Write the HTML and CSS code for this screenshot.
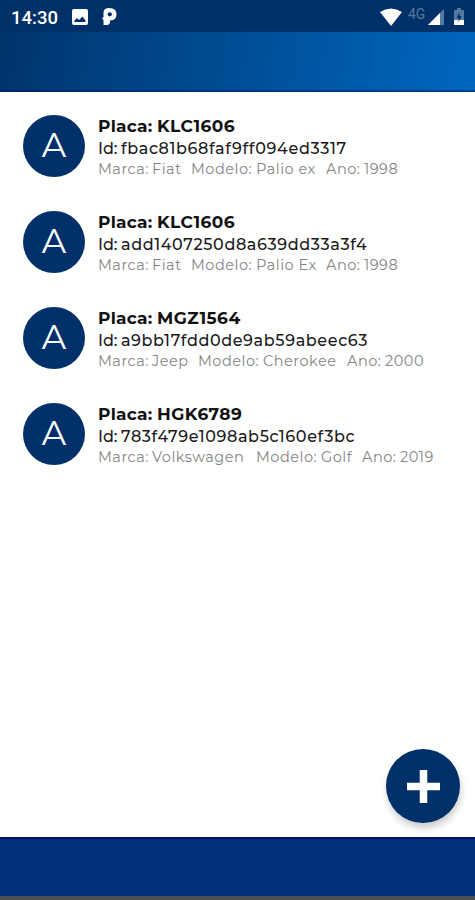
FILE: index.html
```html
<!DOCTYPE html>
<html lang="pt-BR">
<head>
  <meta charset="UTF-8" />
  <meta name="viewport" content="width=device-width, initial-scale=1.0"/>
  <title>Placas</title>
  <link rel="stylesheet" href="styles.css">
</head>
<body>
  <div class="status-bar">
    <span class="time">14:30</span>
    <svg class="icon-picture" width="16" height="16" viewBox="0 0 16 16">
      <rect width="16" height="16" rx="2" fill="#fff"/>
      <path d="M2.500 13v-1.500l2.500-2.500 2 2L10.500 7.500l3 4V13z" fill="#003068"/>
    </svg>
    <svg class="icon-p" width="15" height="17" viewBox="0 0 15 17">
      <path d="M1.500 17V12L0 10.500 1.500 9V4Q2 0 7 0q7.500 0 7.500 6.300Q14.500 12.500 8 12.500V15l-2 2z" fill="#fff"/>
      <circle cx="7.800" cy="6.300" r="2.100" fill="#003068"/>
    </svg>
    <div class="status-right">
      <svg class="icon-wifi" width="22" height="18" viewBox="0 0 22 18">
        <path d="M0 4Q11-3 22 4L11 18z" fill="#fff"/>
      </svg>
      <span class="network">4G</span>
      <svg class="icon-signal" width="16" height="16" viewBox="0 0 16 16">
        <path d="M0 16L16 0v16z" fill="#56799f"/>
        <path d="M0 16L12 4v12z" fill="#fff"/>
      </svg>
      <svg class="icon-battery" width="10" height="17" viewBox="0 0 10 17">
        <path d="M0 2h3V0h4v2h3v10H0z" fill="#56799f"/>
        <path d="M0 12h10v5H0z" fill="#fff"/>
        <path d="M5.500 4L2.500 10h2v4l3-6h-2z" fill="#003068"/>
      </svg>
    </div>
  </div>

  <header class="header"></header>

  <main class="list">
    <div class="item">
      <div class="avatar">A</div>
      <div class="info">
        <div class="placa"><span class="label">Placa:</span><span>KLC1606</span></div>
        <div class="codigo"><span class="label">Id:</span><span>fbac81b68faf9ff094ed3317</span></div>
        <div class="detalhes"><span class="marca">Marca:</span><span class="fiat">Fiat</span><span class="modelo">Modelo:</span><span class="palio">Palio ex</span><span class="ano">Ano:</span><span>1998</span></div>
      </div>
    </div>
    <div class="item">
      <div class="avatar">A</div>
      <div class="info">
        <div class="placa"><span class="label">Placa:</span><span>KLC1606</span></div>
        <div class="codigo"><span class="label">Id:</span><span>add1407250d8a639dd33a3f4</span></div>
        <div class="detalhes"><span class="marca">Marca:</span><span class="fiat">Fiat</span><span class="modelo">Modelo:</span><span class="palio">Palio Ex</span><span class="ano">Ano:</span><span>1998</span></div>
      </div>
    </div>
    <div class="item">
      <div class="avatar">A</div>
      <div class="info">
        <div class="placa"><span class="label">Placa:</span><span>MGZ1564</span></div>
        <div class="codigo"><span class="label">Id:</span><span>a9bb17fdd0de9ab59abeec63</span></div>
        <div class="detalhes"><span class="marca">Marca:</span><span class="jeep">Jeep</span><span class="modelo">Modelo:</span><span class="cherokee">Cherokee</span><span class="ano">Ano:</span><span>2000</span></div>
      </div>
    </div>
    <div class="item">
      <div class="avatar">A</div>
      <div class="info">
        <div class="placa"><span class="label">Placa:</span><span>HGK6789</span></div>
        <div class="codigo"><span class="label">Id:</span><span>783f479e1098ab5c160ef3bc</span></div>
        <div class="detalhes"><span class="marca">Marca:</span><span class="volks">Volkswagen</span><span class="modelo">Modelo:</span><span class="golf">Golf</span><span class="ano">Ano:</span><span>2019</span></div>
      </div>
    </div>
  </main>

  <button class="add-button" aria-label="Adicionar">
    <svg width="33" height="33" viewBox="0 0 33 33">
      <path d="M16.500 0v33M0 16.500h33" stroke="#fff" stroke-width="7.500"/>
    </svg>
  </button>

  <footer class="footer"></footer>
</body>
</html>
```

FILE: styles.css
```css
body {
  margin: 0;
  height: 900px;
  display: flex;
  flex-direction: column;
  overflow: hidden;
  background-color: #fff;
  font-family: Montserrat, Inter, sans-serif;
}

.status-bar {
  display: flex;
  align-items: center;
  height: 32px;
  padding: 1px 11px 0 11px;
  box-sizing: border-box;
  background-color: #003068;
  color: #fff;
  font-family: Roboto, sans-serif;
}

.time {
  width: 61px;
  font-size: 18.5px;
  font-weight: 500;
  line-height: 32px;
  margin-top: 2px;
}

.icon-p {
  margin-left: 14px;
}

.status-right {
  display: flex;
  align-items: center;
  margin-left: auto;
}

.network {
  width: 20px;
  margin: -6px 0 0 6px;
  color: #56799f;
  font-size: 14px;
  font-weight: 400;
}

.icon-battery {
  margin-left: 10px;
}

.header {
  height: 60px;
  box-sizing: border-box;
  border-bottom: 2px solid rgba(0, 20, 110, 0.5);
  background: linear-gradient(100deg, #00346c, #0067bf);
}

.list {
  flex: 1;
  padding-top: 7px;
}

.item {
  display: flex;
  align-items: center;
  height: 96px;
  padding-left: 23px;
}

.avatar {
  width: 62px;
  height: 62px;
  margin-right: 13px;
  border-radius: 50%;
  background-color: #00306a;
  color: #fff;
  font-size: 34px;
  font-weight: 400;
  line-height: 60px;
  text-align: center;
  margin-top: -2px;
}

.info {
  white-space: nowrap;
  margin-top: -1px;
}

.placa,
.codigo,
.detalhes {
  display: flex;
}

.placa {
  color: #111;
  font-size: 17px;
  font-weight: 700;
  line-height: 23px;
  letter-spacing: 0.45px;
}

.placa .label {
  width: 59px;
  letter-spacing: 0.2px;
}

.codigo {
  color: #1a1a1a;
  font-size: 16px;
  font-weight: 500;
  line-height: 21px;
  letter-spacing: 0.62px;
}

.codigo .label {
  width: 23px;
  letter-spacing: 0;
}

.detalhes {
  color: #858585;
  font-size: 14.5px;
  line-height: 20px;
  letter-spacing: 0.5px;
}

.marca {
  width: 54px;
}

.modelo {
  width: 65px;
}

.ano {
  width: 38px;
}

.fiat {
  width: 39px;
}

.palio {
  width: 70px;
}

.jeep {
  width: 46px;
}

.cherokee {
  width: 84px;
}

.volks {
  width: 104px;
}

.golf {
  width: 41px;
}

.add-button {
  position: absolute;
  left: 386px;
  top: 749px;
  display: flex;
  align-items: center;
  justify-content: center;
  width: 74px;
  height: 74px;
  padding: 0;
  border: none;
  border-radius: 50%;
  background-color: #00306a;
  box-shadow: 1px 5px 7px rgba(0, 0, 0, 0.2);
  cursor: pointer;
}

.footer {
  height: 63px;
  box-sizing: border-box;
  border-top: 2px solid #00106b;
  border-bottom: 4px solid #4a5054;
  background-color: #003178;
}
```
